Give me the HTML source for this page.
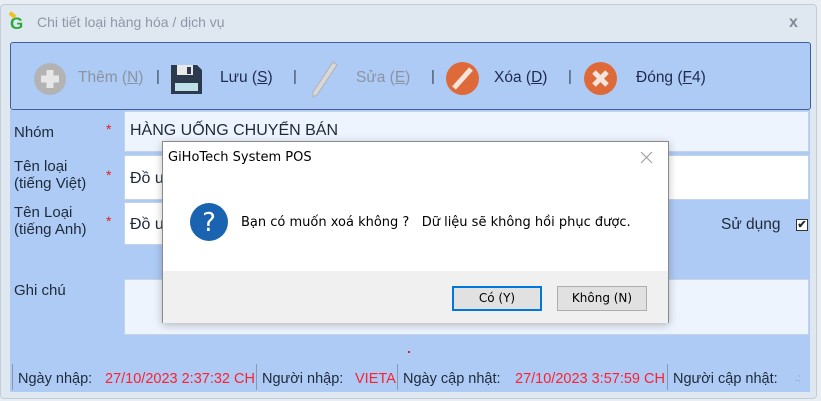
<!DOCTYPE html>
<html><head><meta charset="utf-8"><style>
*{margin:0;padding:0;box-sizing:border-box}
body{width:821px;height:401px;background:#e9eef4;position:relative;overflow:hidden;font-family:"Liberation Sans",sans-serif;color:#1e2a3a}
.abs{position:absolute}
.win{left:0;top:4px;width:817px;height:395px;background:#dfe7f1;border:1px solid #c4ccd6;border-radius:4px}
.t{position:absolute;white-space:nowrap}
.content{left:10px;top:110px;width:800px;height:282px;background:#aecbf5}
.tb{left:10px;top:42px;width:801px;height:68px;background:#aecbf5;border:1px solid #3f5f9c;border-radius:3px}
.inp{position:absolute;border:1px solid #c5d3e6}
.lbl{font-size:15px;color:#1e2a3a;position:absolute;line-height:17px}
.star{color:#e02020;position:absolute;font-size:14px}
.red{color:#ff1f2f}
.dlg{left:162px;top:141px;width:507px;height:182px;background:#fff;border:1px solid #8a8a8a;box-shadow:0 2px 8px rgba(0,0,0,.25);font-family:"DejaVu Sans",sans-serif}
.btn{position:absolute;top:144px;height:25px;width:90px;background:#e1e1e1;border:1px solid #adadad;font-size:12px;text-align:center;line-height:22px;color:#000}
.st{font-size:14.5px}
</style></head><body>
<div class="abs win"></div>
<div class="t" style="left:10px;top:14px;font-size:17px;font-weight:bold;color:#2aa83a">G</div>
<div class="abs" style="left:9px;top:13px;width:7px;height:4px;background:#f0c020;transform:rotate(40deg)"></div>
<div class="t" style="left:37px;top:14px;font-size:14px;color:#8d98a6">Chi tiết loại hàng hóa / dịch vụ</div>
<div class="t" style="left:789px;top:14px;font-size:16px;font-weight:bold;color:#7f8b99">x</div>
<div class="abs content"></div>
<div class="abs tb">
 <svg class="abs" style="left:23px;top:20px" width="32" height="32"><circle cx="16" cy="16" r="16" fill="#b3b3b3"/><path d="M16 7v18M7 16h18" stroke="#e6e6e6" stroke-width="7"/></svg>
 <div class="t" style="left:67px;top:26px;font-size:15.5px;color:#8a94a2">Thêm (<u>N</u>)</div>
 <div class="t" style="left:145px;top:25px;font-size:15px;color:#3a4a60">|</div>
 <svg class="abs" style="left:160px;top:20px" width="31" height="31"><path d="M0 2h26l5 5v24H0z" fill="#2c3a4d"/><rect x="6" y="2" width="16" height="10" fill="#e9e9ea"/><rect x="16" y="4" width="4" height="7" fill="#2c3a4d"/><rect x="4" y="20" width="23" height="8" fill="#bfe0e6"/></svg>
 <div class="t" style="left:209px;top:26px;font-size:15.5px;color:#1e2a50">Lưu (<u>S</u>)</div>
 <div class="t" style="left:282px;top:25px;font-size:15px;color:#3a4a60">|</div>
 <svg class="abs" style="left:298px;top:16px" width="30" height="40"><path d="M24 3l4 3L8 36l-4 2 0-5z" fill="#d8d8d8" stroke="#b0b0b0"/></svg>
 <div class="t" style="left:345px;top:26px;font-size:15.5px;color:#8a94a2">Sửa (<u>E</u>)</div>
 <div class="t" style="left:420px;top:25px;font-size:15px;color:#3a4a60">|</div>
 <svg class="abs" style="left:435px;top:19px" width="33" height="33"><circle cx="16.5" cy="16.5" r="16.5" fill="#de6a3a"/><path d="M8 26L25 7" stroke="#f2e6dc" stroke-width="5"/></svg>
 <div class="t" style="left:483px;top:26px;font-size:15.5px;color:#1e2a50">Xóa (<u>D</u>)</div>
 <div class="t" style="left:557px;top:25px;font-size:15px;color:#3a4a60">|</div>
 <svg class="abs" style="left:573px;top:19px" width="33" height="33"><circle cx="16.5" cy="16.5" r="16.5" fill="#de6a3a"/><path d="M10 10l13 13M23 10L10 23" stroke="#f2e6dc" stroke-width="5"/></svg>
 <div class="t" style="left:625px;top:26px;font-size:15.5px;color:#1e2a50">Đóng (<u>F</u>4)</div>
</div>
<div class="lbl" style="left:14px;top:124px">Nhóm</div><div class="star" style="left:106px;top:121px">*</div>
<div class="inp" style="left:124px;top:111px;width:685px;height:41px;background:#eef4fd"></div>
<div class="t" style="left:130px;top:122px;font-size:16px">HÀNG UỐNG CHUYỂN BÁN</div>
<div class="lbl" style="left:14px;top:158px">Tên loại<br>(tiếng Việt)</div><div class="star" style="left:106px;top:167px">*</div>
<div class="inp" style="left:124px;top:155px;width:685px;height:45px;background:#fff"></div>
<div class="t" style="left:130px;top:170px;font-size:16px">Đồ u</div>
<div class="lbl" style="left:14px;top:204px">Tên Loại<br>(tiếng Anh)</div><div class="star" style="left:106px;top:213px">*</div>
<div class="inp" style="left:124px;top:202px;width:420px;height:43px;background:#fff"></div>
<div class="t" style="left:130px;top:216px;font-size:16px">Đồ u</div>
<div class="t" style="left:721px;top:216px;font-size:15.5px">Sử dụng</div>
<div class="abs" style="left:796px;top:219px;width:12px;height:12px;background:#fff;border:1px solid #333;font-size:11px;line-height:10px;text-align:center;font-weight:bold">✔</div>
<div class="lbl" style="left:14px;top:282px">Ghi chú</div>
<div class="inp" style="left:124px;top:279px;width:685px;height:56px;background:#eef4fd"></div>
<div class="abs" style="left:408px;top:351px;width:2px;height:2px;background:#e02040"></div>
<div class="abs" style="left:12px;top:364px;width:1px;height:26px;background:#8898b0"></div>
<div class="t st" style="left:18px;top:371px">Ngày nhập:</div>
<div class="t red st" style="left:105px;top:371px">27/10/2023 2:37:32 CH</div>
<div class="abs" style="left:256px;top:364px;width:1px;height:26px;background:#8898b0"></div>
<div class="t st" style="left:262px;top:371px">Người nhập:</div>
<div class="t red st" style="left:355px;top:371px">VIETA</div>
<div class="abs" style="left:397px;top:364px;width:1px;height:26px;background:#8898b0"></div>
<div class="t st" style="left:403px;top:371px">Ngày cập nhật:</div>
<div class="t red st" style="left:515px;top:371px">27/10/2023 3:57:59 CH</div>
<div class="abs" style="left:667px;top:364px;width:1px;height:26px;background:#8898b0"></div>
<div class="t st" style="left:673px;top:371px">Người cập nhật:</div>
<div class="t" style="left:795px;top:373px;font-size:10px;color:#8898b0">.:</div>
<div class="abs dlg">
 <div class="t" style="left:5px;top:8px;font-size:13px;color:#000">GiHoTech System POS</div>
 <svg class="abs" style="left:477px;top:9px" width="13" height="13"><path d="M1 1l11 11M12 1L1 12" stroke="#999" stroke-width="1"/></svg>
 <svg class="abs" style="left:27px;top:61px" width="38" height="38"><circle cx="19" cy="19" r="19" fill="#1a63b0"/><text x="19" y="28" text-anchor="middle" font-size="26" fill="#fff" font-family="DejaVu Sans">?</text></svg>
 <div class="t" style="left:78px;top:73px;font-size:13px;color:#000">Bạn có muốn xoá không ?&nbsp;&nbsp; Dữ liệu sẽ không hồi phục được.</div>
 <div class="abs" style="left:0;top:129px;width:505px;height:52px;background:#f0f0f0"></div>
 <div class="btn" style="left:289px;border:2px solid #0078d7;line-height:21px">Có (Y)</div>
 <div class="btn" style="left:394px">Không (N)</div>
</div>
</body></html>
